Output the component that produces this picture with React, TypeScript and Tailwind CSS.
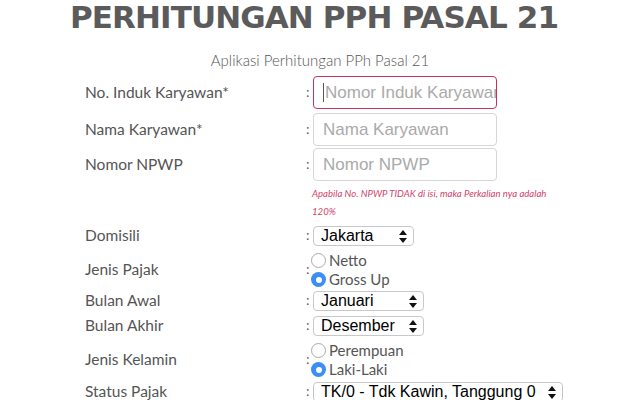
import React from "react";

const LATO = { fontFamily: "Lato, 'Open Sans', sans-serif" };
const SYS = { fontFamily: "'Liberation Sans', Arial, sans-serif" };

function Colon() {
  return <span className="w-[7px] text-[13px] text-[#555]">:</span>;
}

function Row({
  label,
  h,
  children,
  mt = "mt-0",
}: {
  label: string;
  h: string;
  children: React.ReactNode;
  mt?: string;
}) {
  return (
    <div className={`flex items-center ${h} ${mt}`}>
      <div className="w-[246px] pl-[25px] text-[15.5px] text-[#555]" style={LATO}>
        {label}
      </div>
      <Colon />
      <div className="flex items-center">{children}</div>
    </div>
  );
}

function TextBox({ placeholder, focus = false }: { placeholder: string; focus?: boolean }) {
  return (
    <div
      className={`flex h-[33px] w-[184px] items-center overflow-hidden whitespace-nowrap rounded-[4px] border bg-white pl-[9px] text-[17px] text-[#aaa] ${
        focus ? "border-[#c8325a]" : "border-[#d6d6d6]"
      }`}
      style={SYS}
    >
      {focus && <span className="mr-[1px] h-[19px] w-px shrink-0 bg-[#555]" />}
      <span className="whitespace-nowrap">{placeholder}</span>
    </div>
  );
}

function Select({ value, w }: { value: string; w: string }) {
  return (
    <div
      className={`flex h-[20px] ${w} items-center justify-between rounded-[4px] border border-[#c8c8c8] bg-white pl-[7px] pr-[6px] text-[16px] text-black`}
      style={SYS}
    >
      <span className="whitespace-nowrap leading-none">{value}</span>
      <svg width="8" height="13" viewBox="0 0 8 13">
        <path d="M4 0 L8 5 L0 5 Z" fill="#111" />
        <path d="M4 13 L8 8 L0 8 Z" fill="#111" />
      </svg>
    </div>
  );
}

function Radio({ label, checked }: { label: string; checked?: boolean }) {
  return (
    <div className="flex h-[19px] items-center">
      {checked ? (
        <span className="flex h-[15px] w-[15px] items-center justify-center rounded-full bg-[#3a8ef5]">
          <span className="h-[6px] w-[6px] rounded-full bg-white" />
        </span>
      ) : (
        <span className="h-[15px] w-[15px] rounded-full border border-[#aaa] bg-white" />
      )}
      <span className="ml-[3px] text-[15px] text-[#555]" style={LATO}>
        {label}
      </span>
    </div>
  );
}

export default function App() {
  return (
    <div className="h-[400px] w-[640px] overflow-hidden bg-white">
      <h1
        className="pr-[12px] text-center text-[31px] font-bold leading-[34px] tracking-[-0.9px] text-[#5b5b5b]"
        style={{ fontFamily: "'DejaVu Sans', sans-serif" }}
      >
        PERHITUNGAN PPH PASAL 21
      </h1>
      <p className="mt-[16px] text-center text-[15px] font-light leading-[20px] text-[#555]" style={LATO}>
        Aplikasi Perhitungan PPh Pasal 21
      </p>

      <div className="mt-[6px] pl-[60px]">
        <Row label="No. Induk Karyawan*" h="h-[33px]">
          <TextBox placeholder="Nomor Induk Karyawan" focus />
        </Row>
        <Row label="Nama Karyawan*" h="h-[33px]" mt="mt-[4px]">
          <TextBox placeholder="Nama Karyawan" />
        </Row>
        <Row label="Nomor NPWP" h="h-[33px]" mt="mt-[2px]">
          <TextBox placeholder="Nomor NPWP" />
        </Row>

        <div className="ml-[252px] mt-[4px] w-[260px] text-[9.6px] italic leading-[18px] text-[#d2436a]" style={LATO}>
          Apabila No. NPWP TIDAK di isi, maka Perkalian nya adalah
          <br />
          120%
        </div>

        <Row label="Domisili" h="h-[20px]" mt="mt-[5px]">
          <Select value="Jakarta" w="w-[101px]" />
        </Row>
        <Row label="Jenis Pajak" h="h-[38px]" mt="mt-[5px]">
          <div className="-ml-[2px] flex flex-col">
            <Radio label="Netto" />
            <Radio label="Gross Up" checked />
          </div>
        </Row>
        <Row label="Bulan Awal" h="h-[20px]" mt="mt-[2px]">
          <Select value="Januari" w="w-[111px]" />
        </Row>
        <Row label="Bulan Akhir" h="h-[20px]" mt="mt-[5px]">
          <Select value="Desember" w="w-[111px]" />
        </Row>
        <Row label="Jenis Kelamin" h="h-[38px]" mt="mt-[5px]">
          <div className="-ml-[2px] flex flex-col">
            <Radio label="Perempuan" />
            <Radio label="Laki-Laki" checked />
          </div>
        </Row>
        <Row label="Status Pajak" h="h-[20px]" mt="mt-[3px]">
          <Select value="TK/0 - Tdk Kawin, Tanggung 0" w="w-[250px]" />
        </Row>
      </div>
    </div>
  );
}
